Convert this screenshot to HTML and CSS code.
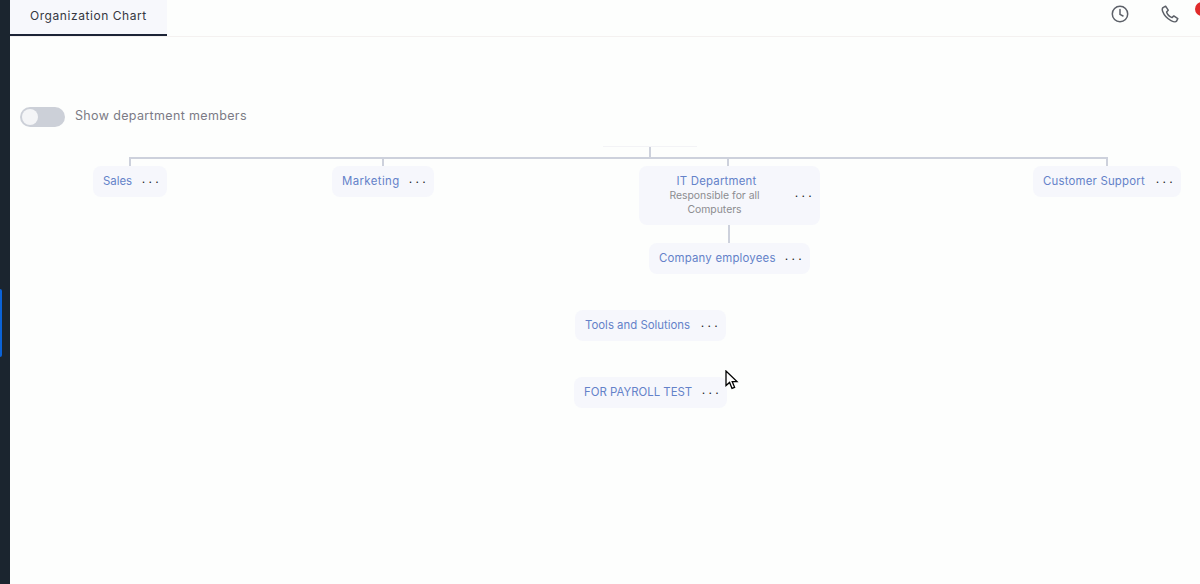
FILE: index.html
```html
<!DOCTYPE html>
<html lang="en">
<head>
<meta charset="utf-8">
<title>Organization Chart</title>
<link rel="stylesheet" href="styles.css">
</head>
<body>
<div class="app">
  <aside class="rail"><span class="rail-mark"></span></aside>
  <main class="main">
    <header class="topbar">
      <div class="tab">Organization Chart</div>
      <div class="actions">
        <svg class="icon" viewBox="0 0 18 18" width="18" height="18"><circle cx="9" cy="9" r="7.7"/><path d="M9 4.5V9.4L12 11"/></svg>
        <svg class="icon" viewBox="0 0 18 18" width="18" height="18"><path d="M2 2.6 4.6 1.2 7.2 5.2 5.6 7C6.3 9.4 8.6 11.7 11 12.6L12.8 10.9 16.8 13.6 15.4 16.3C14.6 17.2 12.6 16.9 10 15.6 6 13.6 3 10 1.7 6.6 1.1 5 1.2 3.4 2 2.6Z"/></svg>
        <span class="badge"></span>
      </div>
    </header>
    <section class="toggle-row">
      <span class="switch"><span class="knob"></span></span>
      <span class="toggle-label">Show department members</span>
    </section>
    <section class="chart">
      <span class="root-stub"></span>
      <span class="line h-main"></span>
      <span class="line v-root"></span>
      <span class="line v-sales"></span>
      <span class="line v-marketing"></span>
      <span class="line v-it"></span>
      <span class="line v-support"></span>
      <span class="line v-company"></span>

      <div class="node n-sales"><span class="name">Sales</span><span class="dots">...</span></div>
      <div class="node n-marketing"><span class="name">Marketing</span><span class="dots">...</span></div>
      <div class="node n-it">
        <div class="node-text"><span class="name">IT Department</span><span class="desc">Responsible for all Computers</span></div>
        <span class="dots">...</span>
      </div>
      <div class="node n-support"><span class="name">Customer Support</span><span class="dots">...</span></div>
      <div class="node n-company"><span class="name">Company employees</span><span class="dots">...</span></div>
      <div class="node n-tools"><span class="name">Tools and Solutions</span><span class="dots">...</span></div>
      <div class="node n-payroll"><span class="name">FOR PAYROLL TEST</span><span class="dots">...</span></div>

      <svg class="cursor" viewBox="0 0 14 20" width="14" height="20"><path d="M1 1V15.5L4.6 12.4 7 18.4 9.6 17.3 7.2 11.6H12Z"/></svg>
    </section>
  </main>
</div>
</body>
</html>
```
FILE: styles.css
```css
* { box-sizing: border-box; }
html, body { margin: 0; height: 100%; overflow: hidden; }
body { background: #fdfefd; font-family: Inter, "Open Sans", sans-serif; }
.app { display: flex; height: 584px; }
.rail { width: 10px; flex: none; background: #1b252f; position: relative; }
.rail-mark { position: absolute; left: 0; top: 289px; width: 2px; height: 68px; background: #0b63d8; border-radius: 0 2px 2px 0; }
.main { flex: 1; min-width: 0; display: flex; flex-direction: column; }
.topbar { height: 37px; flex: none; display: flex; justify-content: space-between; border-bottom: 1px solid #f4f1f0; }
.tab { width: 157px; height: 36px; padding: 8px 0 0 20px; background: #f7f8fc; border-bottom: 2px solid #1c2436; color: #35373f; font-size: 12px; letter-spacing: .56px; line-height: 15px; white-space: nowrap; }
.actions { position: relative; display: flex; gap: 32px; padding: 5px 0 0 0; width: 89px; }
.icon { fill: none; stroke: #5c6068; stroke-width: 1.5; stroke-linecap: round; stroke-linejoin: round; flex: none; }
.badge { position: absolute; left: 84px; top: 2px; width: 14px; height: 14px; border-radius: 50%; background: #e02b2b; }
.toggle-row { display: flex; align-items: center; gap: 10px; height: 20px; margin: 70px 0 0 10px; flex: none; }
.switch { width: 45px; height: 20px; border-radius: 10px; background: #ccd0d8; padding: 2px; flex: none; }
.knob { display: block; width: 16px; height: 16px; border-radius: 50%; background: #f4f5f7; }
.toggle-label { color: #7b7b85; font-size: 12.5px; letter-spacing: .35px; line-height: 16px; margin-top: -2px; white-space: nowrap; }
.chart { position: relative; flex: 1; }
.line { position: absolute; background: #cdd1dc; }
.root-stub { position: absolute; left: 593px; top: 19px; width: 94px; height: 1px; background: #f3f3f6; }
.h-main { left: 119px; top: 30px; width: 979px; height: 2px; }
.v-root { left: 639px; top: 20px; width: 2px; height: 10px; }
.v-sales { left: 119px; top: 30px; width: 2px; height: 9px; }
.v-marketing { left: 372px; top: 30px; width: 2px; height: 9px; }
.v-it { left: 717px; top: 30px; width: 2px; height: 9px; }
.v-support { left: 1096px; top: 30px; width: 2px; height: 9px; }
.v-company { left: 718px; top: 97px; width: 2px; height: 19px; }
.node { position: absolute; display: flex; align-items: center; justify-content: space-between; height: 31px; padding: 0 10px; background: #f6f7fc; border-radius: 8px; white-space: nowrap; }
.name { color: #6482c9; font-size: 11.4px; letter-spacing: .2px; line-height: 14px; margin-top: -2px; }
.dots { color: #1a1a1a; font-size: 9px; font-weight: 700; letter-spacing: 3.8px; line-height: 12px; height: 12px; flex: none; width: 17px; margin: -4px -2px 0 0; }
.n-sales .name, .n-tools .name, .n-payroll .name { letter-spacing: 0; }
.n-marketing .name { letter-spacing: .4px; }
.n-sales { left: 83px; top: 39px; width: 74px; }
.n-marketing { left: 322px; top: 39px; width: 102px; }
.n-support { left: 1023px; top: 39px; width: 148px; }
.n-company { left: 639px; top: 116px; width: 161px; }
.n-tools { left: 565px; top: 183px; width: 151px; }
.n-payroll { left: 564px; top: 250px; width: 153px; }
.n-it { left: 629px; top: 39px; width: 181px; height: 59px; }
.node-text { width: 131px; display: flex; flex-direction: column; align-items: center; text-align: center; white-space: normal; padding-left: 4px; padding-top: 2px; }
.desc { color: #8c8c90; font-size: 10.4px; line-height: 14px; margin: 1px 0 0 -4px; }
.cursor { position: absolute; left: 715px; top: 243px; fill: #fff; stroke: #000; stroke-width: 1.3; }
```
